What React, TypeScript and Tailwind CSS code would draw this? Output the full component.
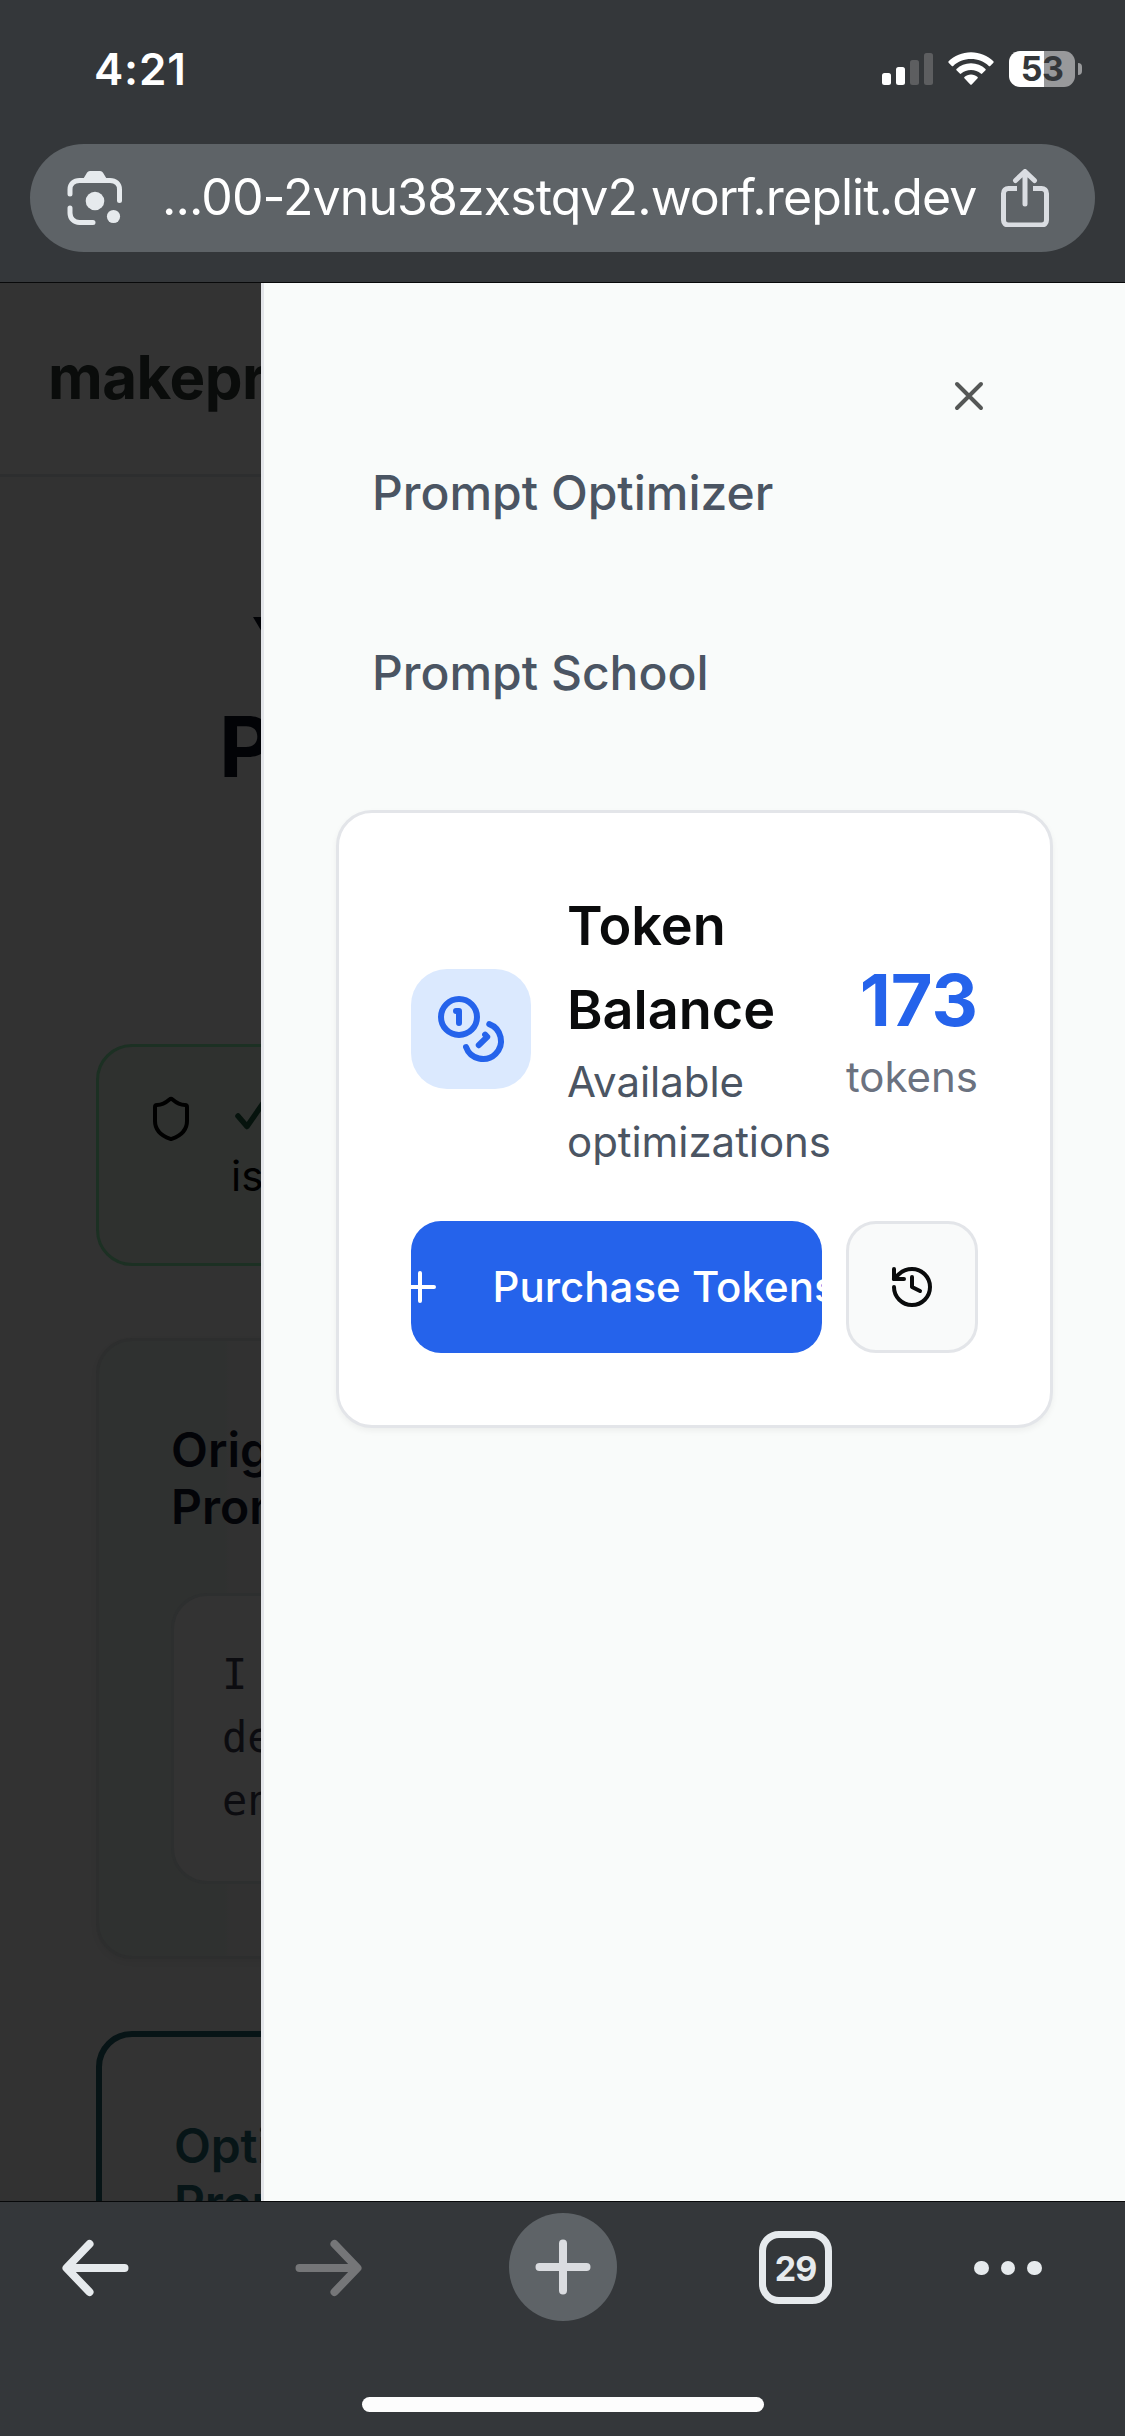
import React from "react";

function StatusBar() {
  return (
    <div className="flex h-[144px] shrink-0 items-start justify-between pr-[43px] pl-[94px]">
      <span className="mt-[42px] text-[44px] leading-[54px] font-semibold tracking-[0.8px] text-white">4:21</span>
      <div className="mt-[51px] flex items-start">
        <svg className="h-9 w-[52px]" viewBox="0 0 52 36">
          <rect x="0" y="22" width="9" height="12" rx="2.5" fill="#fff" />
          <rect x="14" y="16" width="9" height="18" rx="2.5" fill="#fff" />
          <rect x="28" y="9" width="9" height="25" rx="2.5" fill="#5d5e60" />
          <rect x="42" y="2" width="9" height="32" rx="2.5" fill="#5d5e60" />
        </svg>
        <svg className="ml-[14px] h-9 w-[46px]" viewBox="0 0 46 36" fill="#fff">
          <path d="M23 1.2C31.8 1.2 39.7 4.7 45.4 10.3c.4.4.4 1 0 1.4l-3.2 3.2c-.4.4-1 .4-1.4 0C36.1 10.4 29.9 8 23 8S9.9 10.4 5.2 14.9c-.4.4-1 .4-1.4 0L.6 11.7c-.4-.4-.4-1 0-1.4C6.3 4.700 14.200 1.200 23 1.200z" />
          <path d="M23 12.200c5.600 0 10.700 2.100 14.500 5.700.4.4.4 1 0 1.400l-3.300 3.300c-.4.4-1 .4-1.400 0C30.200 20.300 26.800 19 23 19s-7.200 1.300-9.800 3.600c-.4.4-1 .4-1.400 0L8.500 19.300c-.4-.4-.4-1 0-1.400C12.300 14.300 17.400 12.200 23 12.200z" />
          <path d="M23 23.500c2.500 0 4.800.9 6.600 2.400.4.4.4 1 0 1.400l-5.900 6.100c-.4.4-1 .4-1.400 0l-5.900-6.100c-.4-.4-.4-1 0-1.400C18.200 24.400 20.500 23.500 23 23.500z" />
        </svg>
        <div className="ml-[15px] flex h-9 w-[66px] items-center justify-center rounded-[11px] bg-[linear-gradient(90deg,#fff_0_35px,#98999b_35px)] text-[34px] leading-9 font-bold tracking-[-0.5px] text-[#34373a]">
          53
        </div>
        <div className="mt-3 ml-[3px] h-3 w-1 rounded-r-full bg-[#98999b]" />
      </div>
    </div>
  );
}

function AddressBar() {
  return (
    <div className="mx-[30px] flex h-[108px] shrink-0 items-center rounded-full bg-[#5e6367] pr-[46px] pl-[37px]">
      <svg className="h-[56px] w-[56px] shrink-0" viewBox="0 0 56 56" fill="none" stroke="#e6eaed" strokeWidth="5" strokeLinecap="round">
        <path d="M3 24v-4.500C3 14 7 10.500 12.500 10.500H43c5.500 0 9.500 3.500 9.500 9V30.500" />
        <path d="M3 38v5c0 5.500 4 9.500 9.500 9.500H26" />
        <path d="M16.500 8.500l3-5c.8-1.500 1.800-2.500 3.500-2.500h10c1.700 0 2.700 1 3.500 2.500l3 5v2h-23z" fill="#e6eaed" stroke="none" />
        <circle cx="28" cy="31" r="9.300" fill="#e6eaed" stroke="none" />
        <circle cx="46.500" cy="46.500" r="6.600" fill="#e6eaed" stroke="none" />
      </svg>
      <span className="-mt-[3px] ml-[39px] w-[812px] text-[50px] leading-[60px] tracking-[-0.9px] whitespace-nowrap text-white">
        ...00-2vnu38zxstqv2.worf.replit.dev
      </span>
      <svg className="ml-[26px] h-[58px] w-[50px] shrink-0" viewBox="0 0 50 58" fill="none" stroke="#dadde2" strokeWidth="5" strokeLinecap="round" strokeLinejoin="round">
        <path d="M17 19.500H8.500c-3 0-5 2-5 5V51c0 3 2 5 5 5h33c3 0 5-2 5-5V24.500c0-3-2-5-5-5H33" strokeLinecap="butt" />
        <path d="M25 35V3M15.500 11.500L25 2.500l9.500 9" />
      </svg>
    </div>
  );
}

function DimmedPage() {
  return (
    <div className="flex w-[261px] shrink-0 flex-col overflow-hidden bg-[#323232] whitespace-nowrap">
      <div className="flex h-[194px] shrink-0 items-center border-b-[3px] border-[#2d2e2f] bg-[#333333] pb-[3px] pl-12 text-[60px] font-bold text-[#0a0c0b]">
        <span className="tracking-[-0.5px]">makeprompt</span>
      </div>
      <div className="mt-[121px] h-[446px] shrink-0 text-[84px] leading-[99px] font-bold text-[#020306]">
        <div className="pl-[251px]">Your</div>
        <div className="pl-[219px]">Prompt</div>
      </div>
      <div className="ml-24 flex h-[222px] w-[400px] shrink-0 rounded-[36px] border-[3px] border-[#1c3023] bg-[#2f312f] pt-[44px] pl-12 text-black">
        <svg className="mt-1 h-12 w-12 shrink-0" viewBox="0 0 24 24" fill="none" stroke="currentColor" strokeWidth="2" strokeLinecap="round" strokeLinejoin="round">
          <path d="M20 13c0 5-3.500 7.500-7.660 8.950a1 1 0 0 1-.67-.01C7.500 20.500 4 18 4 13V6a1 1 0 0 1 1-1c2 0 4.500-1.200 6.240-2.720a1.170 1.170 0 0 1 1.520 0C14.510 3.810 17 5 19 5a1 1 0 0 1 1 1z" />
        </svg>
        <div className="ml-9 text-[42px] leading-[57px]">
          <svg className="mt-[5px] h-[42px] w-[45px]" viewBox="0 0 45 42" fill="none" stroke="#06130d" strokeWidth="5.500" strokeLinecap="round" strokeLinejoin="round">
            <path d="M7 20l9 10.500L35 3" />
          </svg>
          <div className="mt-[9px]">is clear</div>
        </div>
      </div>
      <div className="mt-[72px] ml-24 h-[621px] w-[600px] shrink-0 rounded-[36px] border-[3px] border-[#2d2e2e] bg-[linear-gradient(90deg,#2f3130_0_126px,#313131_130px)] px-[72px] pt-[80px] shadow-[0_3px_6px_rgba(0,0,0,0.05)]">
        <h2 className="text-[48px] leading-[57px] font-semibold text-[#030408]">
          Original
          <br />
          Prompt
        </h2>
        <div className="mt-[58px] h-[291px] rounded-[36px] border-[3px] border-[#2d2f2f] bg-[#333333] pt-[47px] pl-12 font-['DejaVu_Sans_Mono',monospace] text-[42px] leading-[63px] text-[#0c0c10]">
          I need
          <br />
          detailed
          <br />
          engaging
        </div>
      </div>
      <div className="mt-[72px] ml-24 h-[400px] w-[600px] shrink-0 rounded-[36px] border-[6px] border-[#071416] bg-[#333333] px-[72px] pt-[80px] text-[48px] leading-[57px] font-semibold tracking-[-0.2px] text-[#071517]">
        Optimized
        <br />
        Prompt
      </div>
    </div>
  );
}

function TokenCard() {
  return (
    <div className="mt-[101px] ml-[72px] w-[717px] rounded-[36px] border-[3px] border-[#e3e5e9] bg-white p-[72px] shadow-[0_3px_6px_rgba(0,0,0,0.05)]">
      <div className="flex h-[288px] items-center justify-between">
        <div className="flex items-center gap-9">
          <div className="flex h-[120px] w-[120px] items-center justify-center rounded-[36px] bg-[#dbe9fe]">
            <svg className="h-[72px] w-[72px]" viewBox="0 0 24 24" fill="none" stroke="#2563eb" strokeWidth="2" strokeLinecap="round" strokeLinejoin="round">
              <circle cx="8" cy="8" r="6" />
              <path d="M18.090 10.370A6 6 0 1 1 10.340 18" />
              <path d="M7 6h1v4" />
              <path d="m16.710 13.880.7.710-2.820 2.820" />
            </svg>
          </div>
          <div className="-mt-[2px]">
            <h3 className="text-[54px] leading-[84px] font-semibold text-[#0a0b0c]">
              Token
              <br />
              Balance
            </h3>
            <p className="text-[42px] leading-[60px] tracking-[-0.05px] text-[#4b5563]">
              Available
              <br />
              optimizations
            </p>
          </div>
        </div>
        <div className="flex flex-col items-end">
          <span className="text-[72px] leading-[96px] font-bold text-[#2563eb]">173</span>
          <span className="-mt-px text-[42px] leading-[60px] text-[#6b7280]">tokens</span>
        </div>
      </div>
      <div className="mt-12 flex gap-6">
        <button className="flex h-[132px] w-[411px] items-center justify-center overflow-hidden rounded-[30px] bg-[#2563eb] text-[42px] font-medium whitespace-nowrap text-white">
          <svg className="mr-12 h-12 w-12 shrink-0" viewBox="0 0 24 24" fill="none" stroke="currentColor" strokeWidth="2" strokeLinecap="round">
            <path d="M5 12h14M12 5v14" />
          </svg>
          <span className="-mt-px">Purchase Tokens</span>
        </button>
        <button className="flex h-[132px] w-[132px] items-center justify-center rounded-[30px] border-[3px] border-[#e3e5e9] bg-[#f9fafa] text-[#0a0b0c]">
          <svg className="h-12 w-12" viewBox="0 0 24 24" fill="none" stroke="currentColor" strokeWidth="2" strokeLinecap="round" strokeLinejoin="round">
            <path d="M3 12a9 9 0 1 0 9-9 9.750 9.750 0 0 0-6.740 2.740L3 8" />
            <path d="M3 3v5h5" />
            <path d="M12 7v5l4 2" />
          </svg>
        </button>
      </div>
    </div>
  );
}

function SidePanel() {
  return (
    <div className="flex grow flex-col border-l-[3px] border-[#e3e5e9] bg-[#f9fbfa]">
      <button className="mt-[89px] mr-[132px] self-end text-[#555756]">
        <svg className="h-12 w-12" viewBox="0 0 24 24" fill="none" stroke="currentColor" strokeWidth="2" strokeLinecap="round">
          <path d="M18 6 6 18M6 6l12 12" />
        </svg>
      </button>
      <nav className="mt-[37px] flex flex-col gap-[108px] pl-[108px] text-[48px] leading-[72px] font-medium text-[#4b5563]">
        <span>Prompt Optimizer</span>
        <span>Prompt School</span>
      </nav>
      <TokenCard />
    </div>
  );
}

function BottomBar() {
  return (
    <div className="flex h-[235px] shrink-0 flex-col border-t border-[#08090a]">
      <div className="flex h-[132px] items-center pl-[62px]">
        <svg className="h-[58px] w-[67px]" viewBox="0 0 67 58" fill="none" stroke="#e6eaed" strokeWidth="8" strokeLinecap="round" strokeLinejoin="round">
          <path d="M62.500 29H5M27.500 5L4.500 29l23 24" />
        </svg>
        <svg className="ml-[166px] h-[58px] w-[67px]" viewBox="0 0 67 58" fill="none" stroke="#757678" strokeWidth="8" strokeLinecap="round" strokeLinejoin="round">
          <path d="M4.500 29H62M39.500 5l23 24-23 24" />
        </svg>
        <div className="-mt-[2px] ml-[147px] flex h-[108px] w-[108px] items-center justify-center rounded-full bg-[#5e6367]">
          <svg className="h-14 w-14" viewBox="0 0 56 56" stroke="#dadce0" strokeWidth="8" strokeLinecap="round">
            <path d="M4.500 28h47M28 4.500v47" />
          </svg>
        </div>
        <div className="-mt-px ml-[142px] flex h-[73px] w-[73px] items-center justify-center rounded-[20px] border-[7px] border-[#e6eaed] pt-[2px] text-[34px] leading-none font-bold tracking-[-1px] text-[#e6eaed]">
          29
        </div>
        <div className="ml-[142px] flex gap-3">
          <span className="h-[14.5px] w-[14.5px] rounded-full bg-[#e6eaed]" />
          <span className="h-[14.5px] w-[14.5px] rounded-full bg-[#e6eaed]" />
          <span className="h-[14.5px] w-[14.5px] rounded-full bg-[#e6eaed]" />
        </div>
      </div>
      <div className="mt-[63px] h-[15px] w-[402px] self-center rounded-full bg-[#fdfdfd]" />
    </div>
  );
}

export default function App() {
  return (
    <div className="flex h-[2436px] w-[1125px] flex-col overflow-hidden bg-[#34373a] font-[Inter,sans-serif]">
      <StatusBar />
      <AddressBar />
      <div className="mt-[30px] flex h-[1919px] shrink-0 overflow-hidden border-t border-[#08090a]">
        <DimmedPage />
        <SidePanel />
      </div>
      <BottomBar />
    </div>
  );
}
